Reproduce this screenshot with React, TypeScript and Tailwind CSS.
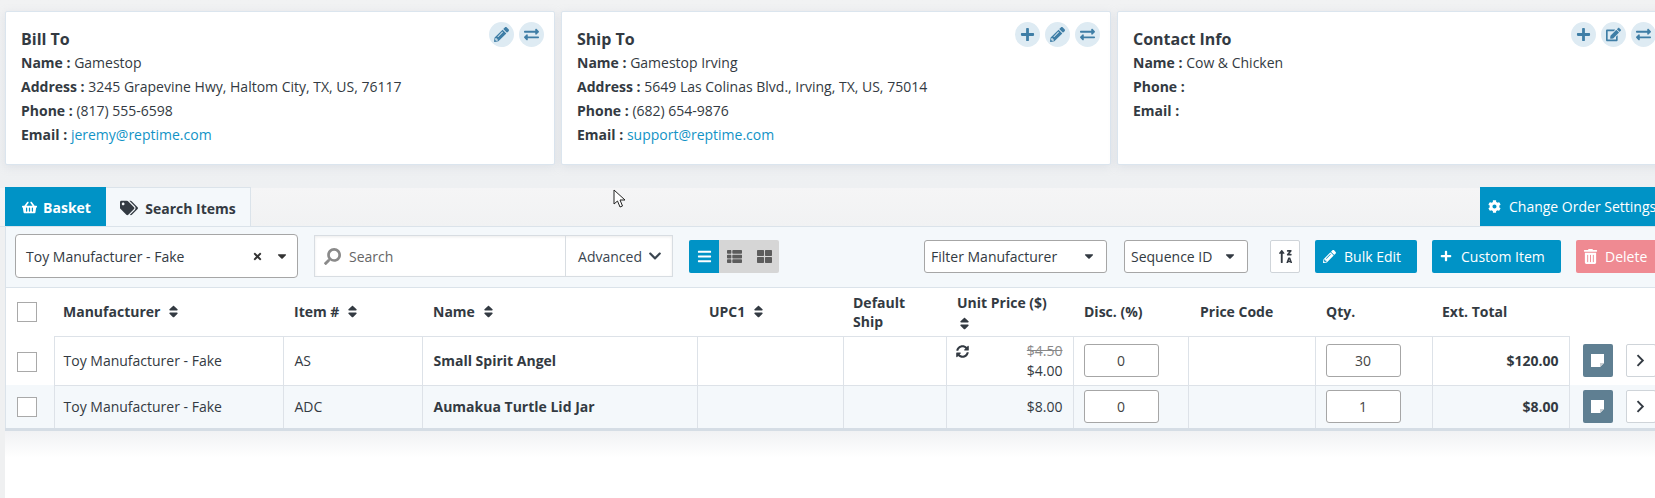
import {
  FaCaretDown,
  FaChevronDown,
  FaCog,
  FaEdit,
  FaExchangeAlt,
  FaBars,
  FaPencilAlt,
  FaPlus,
  FaSearch,
  FaShoppingBasket,
  FaSort,
  FaSortAlphaUpAlt,
  FaSyncAlt,
  FaTags,
  FaThLarge,
  FaThList,
  FaTimes,
  FaTrashAlt,
} from "react-icons/fa";
import type { ReactNode } from "react";

function RoundIcon({ children }: { children: ReactNode }) {
  return (
    <span className="flex h-[25px] w-[25px] items-center justify-center rounded-full bg-[#deebf3] text-[15px] text-[#3f7ea6]">
      {children}
    </span>
  );
}

function Line({ label, children }: { label: string; children?: ReactNode }) {
  return (
    <div className="h-6 leading-6">
      <b className="font-bold">{label} :</b> {children}
    </div>
  );
}

function Card({
  title,
  icons,
  children,
}: {
  title: string;
  icons: ReactNode;
  children: ReactNode;
}) {
  return (
    <div className="relative h-[154px] w-[550px] shrink-0 rounded-[2px] border border-[#dbe5ee] bg-white px-[15px] pt-[15px] shadow-[0_2px_8px_rgba(170,180,195,0.25)]">
      <div className="absolute right-[10px] top-[10px] flex gap-[5px]">{icons}</div>
      <h3 className="h-[24px] text-[16px] font-bold leading-[24px]">{title}</h3>
      {children}
    </div>
  );
}

function Sort() {
  return <FaSort className="ml-[2px] inline align-[-2px] text-[15px]" />;
}

function Th({ w, children, className = "" }: { w: number; children?: ReactNode; className?: string }) {
  return (
    <th style={{ width: w }} className={`px-[10px] text-left align-middle font-bold leading-[19px] ${className}`}>
      {children}
    </th>
  );
}

function Box({ className = "" }: { className?: string }) {
  return <span className={`block h-[20px] w-[20px] border border-[#a9a9a9] bg-white ${className}`} />;
}

function Qty({ value }: { value: string }) {
  return (
    <div className="flex h-[33px] w-[75px] items-center justify-center rounded-[3px] border border-[#a6a6a6] bg-white text-[#444]">
      {value}
    </div>
  );
}

function NoteIcon() {
  return (
    <svg width="13" height="13" viewBox="0 0 13 13">
      <path d="M0 0h13v9l-4 4H0z" fill="#fff" />
      <path d="M13 9H9v4z" fill="#c9ced2" />
    </svg>
  );
}

function Row({
  item,
  name,
  price,
  disc,
  qty,
  total,
  striped,
}: {
  item: string;
  name: string;
  price: ReactNode;
  disc: string;
  qty: string;
  total: string;
  striped?: boolean;
}) {
  const td = "border-t border-l border-[#dde2e8] px-[10px]";
  return (
    <tr className={striped ? "h-[43px] bg-[#f4f8fb]" : "h-[49px] bg-white"}>
      <td className="pl-[11px]">
        <Box className={striped ? "" : "mt-[3px]"} />
      </td>
      <td className={`${td} pl-[9px]`}>Toy Manufacturer - Fake</td>
      <td className={`${td} pl-[11px]`}>{item}</td>
      <td className={`${td} pl-[11px] font-bold`}>{name}</td>
      <td className={td} />
      <td className={td} />
      <td className={`${td} relative text-right`}>{price}</td>
      <td className={td}>
        <Qty value={disc} />
      </td>
      <td className={td} />
      <td className={td}>
        <Qty value={qty} />
      </td>
      <td className={`${td} border-r text-right font-bold`}>{total}</td>
      <td className="pl-[13px]">
        <div className="flex gap-[13px]">
          <span className="flex h-[33px] w-[30px] items-center justify-center rounded-[2px] bg-[#5f7f92]">
            <NoteIcon />
          </span>
          <span className="flex h-[33px] w-[30px] items-center justify-center rounded-[2px] border border-[#cfd4d9] bg-white">
            <svg width="9" height="13" viewBox="0 0 9 13" fill="none" stroke="#333a42" strokeWidth="1.9">
              <path d="M1.5 1.2 6.8 6.5 1.5 11.8" />
            </svg>
          </span>
        </div>
      </td>
    </tr>
  );
}

export default function App() {
  return (
    <div className="relative h-[498px] w-[1655px] overflow-hidden bg-[#eff0f1] font-['Open_Sans',sans-serif] text-[14px] text-[#333a42]">
      <div className="h-[188px] bg-gradient-to-b from-[#f1f2f3] to-[#eef0f2] pl-[5px] pt-[11px]">
        <div className="flex gap-[6px]">
          <Card
            title="Bill To"
            icons={
              <>
                <RoundIcon><FaPencilAlt /></RoundIcon>
                <RoundIcon><FaExchangeAlt /></RoundIcon>
              </>
            }
          >
            <Line label="Name">Gamestop</Line>
            <Line label="Address">3245 Grapevine Hwy, Haltom City, TX, US, 76117</Line>
            <Line label="Phone">(817) 555-6598</Line>
            <Line label="Email"><span className="text-[#1293c6]">jeremy@reptime.com</span></Line>
          </Card>
          <Card
            title="Ship To"
            icons={
              <>
                <RoundIcon><FaPlus /></RoundIcon>
                <RoundIcon><FaPencilAlt /></RoundIcon>
                <RoundIcon><FaExchangeAlt /></RoundIcon>
              </>
            }
          >
            <Line label="Name">Gamestop Irving</Line>
            <Line label="Address">5649 Las Colinas Blvd., Irving, TX, US, 75014</Line>
            <Line label="Phone">(682) 654-9876</Line>
            <Line label="Email"><span className="text-[#1293c6]">support@reptime.com</span></Line>
          </Card>
          <Card
            title="Contact Info"
            icons={
              <>
                <RoundIcon><FaPlus /></RoundIcon>
                <RoundIcon><FaEdit /></RoundIcon>
                <RoundIcon><FaExchangeAlt /></RoundIcon>
              </>
            }
          >
            <Line label="Name">Cow &amp; Chicken</Line>
            <Line label="Phone" />
            <Line label="Email" />
          </Card>
        </div>
      </div>

      <div className="flex h-[39px] items-end justify-between border-b border-[#dbe3ea] bg-gradient-to-b from-[#f5f5f6] to-[#f1f2f3] pl-[5px]">
        <div className="flex h-[39px]">
          <div className="flex w-[101px] items-center justify-center gap-[6px] bg-[#0093c6] pl-[2px] pt-[2px] font-bold text-white">
            <FaShoppingBasket className="text-[15px]" /> Basket
          </div>
          <div className="flex w-[145px] items-center justify-center gap-[7px] border-r border-t border-[#dbe3ea] bg-[#f4f8fb] pt-[2px] font-bold">
            <FaTags className="text-[18px]" /> Search Items
          </div>
        </div>
        <div className="flex h-[39px] w-[187px] shrink-0 translate-x-[12px] items-center gap-[8px] bg-[#0093c6] pl-[8px] text-white">
          <FaCog className="text-[13px]" /> Change Order Settings
        </div>
      </div>

      <div className="ml-[5px] flex h-[61px] items-center border-b border-l border-[#dbe3ea] bg-[#f4f8fb] pb-[2px] pl-[9px]">
        <div className="flex h-[44px] w-[283px] shrink-0 items-center rounded-[4px] border border-[#a6a6a6] bg-white pl-[10px] pr-[8px]">
          <span className="flex-1">Toy Manufacturer - Fake</span>
          <FaTimes className="mr-[12px] text-[11px] text-[#333]" />
          <FaCaretDown className="text-[14px] text-[#333]" />
        </div>
        <div className="ml-[16px] flex h-[42px] w-[359px] shrink-0 items-center border border-[#d8dde2] bg-white shadow-[inset_0_1px_3px_rgba(0,0,0,0.08)]">
          <FaSearch className="ml-[9px] -scale-x-100 text-[17px] text-[#8a8a8a]" />
          <span className="ml-[8px] flex-1 text-[#666]">Search</span>
          <div className="flex h-full w-[107px] shrink-0 items-center justify-center gap-[6px] border-l border-[#d8dde2] pl-[2px] text-[#3b4650]">
            Advanced <FaChevronDown className="text-[14px]" />
          </div>
        </div>
        <div className="ml-[16px] flex h-[33px] w-[90px] shrink-0 overflow-hidden rounded-[2px] bg-[#d6d6d6] text-[15px] text-[#5c5c5c]">
          <span className="flex w-[30px] items-center justify-center bg-[#0093c6] text-white"><FaBars /></span>
          <span className="flex w-[30px] items-center justify-center"><FaThList /></span>
          <span className="flex w-[30px] items-center justify-center"><FaThLarge /></span>
        </div>
        <div className="ml-[145px] flex h-[33px] w-[183px] shrink-0 items-center justify-between rounded-[3px] border border-[#a6a6a6] bg-white pl-[6px] pr-[10px]">
          Filter Manufacturer <FaCaretDown className="text-[14px]" />
        </div>
        <div className="ml-[17px] flex h-[33px] w-[124px] shrink-0 items-center justify-between rounded-[3px] border border-[#a6a6a6] bg-white pl-[6px] pr-[10px]">
          Sequence ID <FaCaretDown className="text-[14px]" />
        </div>
        <div className="ml-[22px] flex h-[33px] w-[30px] shrink-0 items-center justify-center rounded-[2px] border border-[#cfd4d9] bg-white text-[15px]">
          <FaSortAlphaUpAlt />
        </div>
        <div className="ml-[15px] flex h-[33px] w-[102px] shrink-0 items-center gap-[8px] rounded-[2px] bg-[#0093c6] pl-[8px] text-white">
          <FaPencilAlt className="text-[13px]" /> Bulk Edit
        </div>
        <div className="ml-[15px] flex h-[33px] w-[129px] shrink-0 items-center gap-[9px] rounded-[2px] bg-[#0093c6] pl-[8px] text-white">
          <FaPlus className="text-[12px]" /> Custom Item
        </div>
        <div className="ml-[15px] flex h-[33px] w-[90px] shrink-0 items-center gap-[7px] rounded-[2px] bg-[#ef8a92] pl-[7px] text-white">
          <FaTrashAlt className="text-[15px]" /> Delete
        </div>
      </div>

      <div className="ml-[5px] border-l border-[#dbe3ea]">
        <table className="w-[1660px] table-fixed border-collapse">
          <thead>
            <tr className="h-[48px] bg-white">
              <Th w={48} className="pl-[11px]"><Box /></Th>
              <Th w={229} className="pl-[9px]">Manufacturer <Sort /></Th>
              <Th w={139} className="pl-[11px]">Item # <Sort /></Th>
              <Th w={275} className="pl-[11px]">Name <Sort /></Th>
              <Th w={146} className="pl-[12px]">UPC1 <Sort /></Th>
              <Th w={103}>Default Ship</Th>
              <Th w={127} className="pl-[11px]">Unit Price ($)<br /><FaSort className="inline text-[15px]" /></Th>
              <Th w={115} className="pl-[11px]">Disc. (%)</Th>
              <Th w={127} className="pl-[12px]">Price Code</Th>
              <Th w={117} className="pl-[11px]">Qty.</Th>
              <Th w={137}>Ext. Total</Th>
              <Th w={97} />
            </tr>
          </thead>
          <tbody>
            <Row
              item="AS"
              name="Small Spirit Angel"
              price={
                <>
                  <FaSyncAlt className="absolute left-[9px] top-[8px] text-[13px]" />
                  <div className="leading-[20px] text-[#888] line-through">$4.50</div>
                  <div className="leading-[20px]">$4.00</div>
                </>
              }
              disc="0"
              qty="30"
              total="$120.00"
            />
            <Row item="ADC" name="Aumakua Turtle Lid Jar" price="$8.00" disc="0" qty="1" total="$8.00" striped />
          </tbody>
        </table>
      </div>
      <div className="ml-[5px] h-[72px] bg-white">
        <div className="h-[30px] border-t-[3px] border-[#d5dde5] bg-gradient-to-b from-[#f1f2f4] to-white" />
      </div>

      <svg className="absolute left-[613px] top-[189px]" width="14" height="20" viewBox="0 0 14 20">
        <path d="M1 1v14l3.5-3 2.5 6 2.5-1-2.5-6H12z" fill="#fff" stroke="#222" strokeWidth="1" />
      </svg>
    </div>
  );
}
